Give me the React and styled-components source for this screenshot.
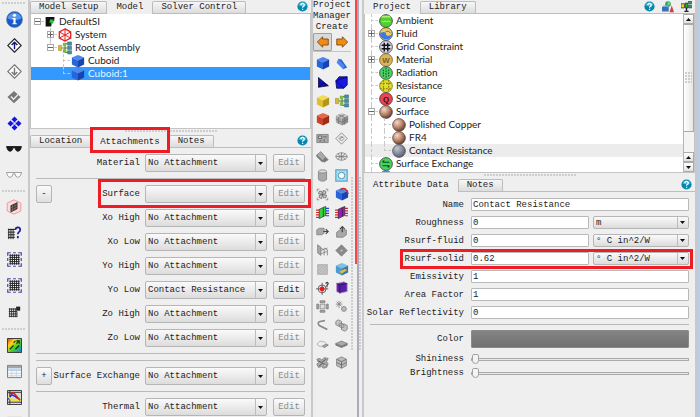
import React, { useId } from "react";
import styled, { createGlobalStyle, css } from "styled-components";

const Global = createGlobalStyle`
  * { box-sizing: border-box; }
  body { margin: 0; background: #efefef; }
  button, input, select { font: inherit; color: inherit; margin: 0; }
`;

const MONO = `"Liberation Mono", "DejaVu Sans Mono", monospace`;
const SANS = `Lato, "Noto Sans", sans-serif`;
const RED = "#ee1c25";

/* ---------- page frame ---------- */

const Page = styled.div`
  display: grid;
  grid-template-columns: 28px minmax(0, 285fr) 38px 11px minmax(0, 335fr) 3px;
  height: 100vh;
  overflow: hidden;
  background: #efefef;
  color: #1c1c1c;
  font: 9px/12px ${MONO};
`;

const SideBar = styled.nav`
  display: flex;
  flex-direction: column;
  align-items: stretch;
`;

const SideButton = styled.button`
  flex: none;
  display: grid;
  place-items: center;
  height: 26px;
  padding: 0;
  border: 0;
  background: none;
`;

const dots = css`
  background-image: radial-gradient(circle at 1px 1px, #cecece 1px, transparent 1px);
  background-size: 3px 3px;
`;

const SideGrip = styled.div`
  flex: none;
  height: ${(p) => p.$height}px;
  padding: ${(p) => p.$height - 4}px 2px 0;
  &::after {
    content: "";
    display: block;
    height: 3px;
    ${dots}
  }
`;

const Panel = styled.section`
  display: flex;
  flex-direction: column;
  min-width: 0;
  border-left: 2px solid #c9c9c9;
  border-right: 2px solid #c9c9c9;
`;

const BlueEdge = styled.div`
  background: #b5cfed;
`;

const Divider = styled.div`
  display: grid;
  grid-template-columns: 4px 2px 2px 3px;
  height: 100%;
`;

const DividerMark = styled.div`
  height: 264px;
  background: #f9454a;
`;

const DividerBar = styled.div`
  background: #a9acba;
`;

const VerticalDots = styled.div`
  align-self: start;
  justify-self: start;
  width: 3px;
  height: 174px;
  margin-top: 177px;
  ${dots}
`;

const PanelGrip = styled.div`
  flex: none;
  height: 5px;
  display: grid;
  place-items: center;
  &::after {
    content: "";
    width: 92px;
    height: 3px;
    ${dots}
  }
`;

/* ---------- tabs ---------- */

const TabBar = styled.div`
  flex: none;
  display: flex;
  align-items: flex-end;
  height: 14px;
  border-bottom: 1px solid #bdbdbd;
`;

const Tab = styled.button`
  height: ${(p) => (p.$active ? 14 : 12)}px;
  margin-bottom: ${(p) => (p.$active ? -1 : 0)}px;
  padding: 0 8px;
  border: 1px solid ${(p) => (p.$active ? "#efefef" : "#bcbcbc")};
  border-bottom: 0;
  border-radius: 2px 2px 0 0;
  background: ${(p) => (p.$active ? "#efefef" : "linear-gradient(#f7f7f7, #dcdcdc)")};
  line-height: 11px;
  white-space: nowrap;
`;

const TabTools = styled.div`
  display: flex;
  gap: 7px;
  margin-left: auto;
  padding-right: 3px;
  align-self: center;
`;

const PlainButton = styled.button`
  display: grid;
  place-items: center;
  padding: 0;
  border: 0;
  background: none;
`;

const Marked = styled.span`
  position: relative;
  display: flex;
  height: 14px;
  align-items: flex-end;
  margin-bottom: -1px;
  &::after {
    content: "";
    position: absolute;
    inset: -7px -1px -5px -1px;
    border: 3px solid ${RED};
    pointer-events: none;
    z-index: 2;
  }
`;

/* ---------- trees ---------- */

const TreeBox = styled.div`
  flex: none;
  display: flex;
  height: ${(p) => p.$height}px;
  padding-top: ${(p) => p.$top}px;
  overflow: hidden;
  background: #fff;
  border: solid #c4c4c4;
  border-width: 0 1px 1px 1px;
`;

const TreeList = styled.ul`
  flex: 1;
  margin: 0;
  padding: 0;
  list-style: none;
  font: 10px/13px ${SANS};
`;

const TreeRow = styled.li`
  display: flex;
  align-items: center;
  height: 13px;
  white-space: nowrap;
  background: ${(p) => p.$bg || "none"};
  color: ${(p) => p.$color || "#222"};
`;

const Guide = styled.span`
  flex: none;
  align-self: stretch;
  width: 13px;
  display: grid;
  grid-template-columns: 6px 7px;
  place-items: center start;
  &::before {
    content: "";
    grid-column: 2;
    grid-row: 1;
    align-self: start;
    width: 0;
    height: ${(p) => (p.$line === "end" ? "50%" : "100%")};
    border-left: ${(p) => (p.$line ? "1px dashed #c8c8c8" : "0")};
  }
  &::after {
    content: "";
    grid-column: 2;
    grid-row: 1;
    width: ${(p) => (p.$branch ? 7 : 0)}px;
    border-top: 1px dashed #c8c8c8;
  }
`;

const Expander = styled.button`
  grid-column: 1 / 3;
  grid-row: 1;
  justify-self: start;
  z-index: 1;
  width: 7px;
  height: 7px;
  margin-left: 3px;
  padding: 0;
  display: grid;
  place-items: center;
  border: 1px solid #aaa;
  background: #fff;
`;

const IconSlot = styled.span`
  flex: none;
  display: grid;
  place-items: center;
  width: ${(p) => p.$width || 15}px;
  margin-right: 3px;
`;

const ScrollBar = styled.div`
  flex: none;
  display: flex;
  flex-direction: column;
  width: 11px;
  border-left: 1px solid #b5b5b5;
  background: #f4f4f4;
`;

const ScrollButton = styled.button`
  flex: none;
  display: grid;
  place-items: center;
  height: 10px;
  padding: 0;
  border: 1px solid #aaa;
  border-left: 0;
  background: linear-gradient(#fff, #e2e2e2);
`;

const ScrollThumb = styled.div`
  height: 108px;
  margin-bottom: auto;
  display: grid;
  place-items: center;
  border: 1px solid #aaa;
  border-left: 0;
  background: linear-gradient(90deg, #fff, #e6e6e6);
  &::after {
    content: "";
    width: 7px;
    height: 12px;
    ${dots}
  }
`;

/* ---------- forms ---------- */

const AttachForm = styled.form`
  padding: 6px 6px 0 6px;
  display: flex;
  flex-direction: column;
  gap: 6px;
`;

const AttachRow = styled.div`
  position: relative;
  flex: none;
  display: grid;
  grid-template-columns: 16px 88px minmax(0, 1fr) 32px;
  align-items: center;
  height: 18px;
  label { grid-area: 1 / 2; justify-self: end; white-space: nowrap; }
  ${(p) => p.$marked && css`
    &::after {
      content: "";
      position: absolute;
      inset: -6px -6px -5px 62px;
      border: 3px solid ${RED};
      pointer-events: none;
    }
  `}
`;

const Rule = styled.hr`
  flex: none;
  width: 100%;
  margin: 0;
  border: 0;
  border-top: 1px solid #b9b9b9;
`;

const SmallButton = styled.button`
  grid-area: 1 / ${(p) => p.$col};
  height: 18px;
  padding: 0;
  border: 1px solid #b4b4b4;
  border-radius: 2px;
  background: linear-gradient(#fbfbfb, #dedede);
  &:disabled { color: #8e8e8e; }
`;

const SelectBox = styled.span`
  display: grid;
  grid-template-columns: minmax(0, 1fr) 11px;
  grid-template-rows: minmax(0, 1fr);
  height: ${(p) => p.$height}px;
  margin: ${(p) => (p.$spaced ? "0 6px 0 5px" : "0")};
  border: 1px solid #b6b6b6;
  border-radius: 2px;
  background: linear-gradient(#fafafa, #dcdcdc);
  ${(p) => p.$spaced && "grid-column: 3; grid-row: 1;"}
  select {
    grid-area: 1 / 1 / 2 / 3;
    align-self: center;
    appearance: none;
    width: 100%;
    padding: 0 12px 0 2px;
    border: 0;
    background: transparent;
    line-height: 12px;
    color: #1c1c1c;
  }
  svg { grid-area: 1 / 2; place-self: center; pointer-events: none; }
  &::after {
    content: "";
    grid-area: 1 / 2;
    justify-self: start;
    border-left: 1px solid #bdbdbd;
    pointer-events: none;
  }
`;

const AttrForm = styled.form`
  padding: 6px 6px 0 6px;
  display: flex;
  flex-direction: column;
  gap: 5px;
`;

const AttrRow = styled.div`
  position: relative;
  display: grid;
  grid-template-columns: 94px minmax(0, 1fr) ${(p) => (p.$unit ? "minmax(0, 96px)" : "")};
  column-gap: 4px;
  align-items: center;
  height: ${(p) => p.$height || 13}px;
  label { justify-self: end; white-space: nowrap; }
  > :nth-child(2) { margin-left: 3px; }
  ${(p) => p.$marked && css`
    &::after {
      content: "";
      position: absolute;
      inset: -3px -4px -4px 30px;
      border: 3px solid ${RED};
      pointer-events: none;
    }
  `}
`;

const TextField = styled.input`
  min-width: 0;
  height: 13px;
  padding: 0 1px;
  border: 1px solid #b9b9b9;
  border-radius: 1px;
  background: #fff;
`;

const ColorButton = styled.button`
  height: 18px;
  border: 1px solid #8a8a8a;
  border-radius: 1px;
  background: linear-gradient(#848484, #717171);
`;

const Slider = styled.input`
  appearance: none;
  min-width: 0;
  height: 10px;
  background: none;
  &::-webkit-slider-runnable-track {
    height: 3px;
    border: 1px solid #ababab;
    background: #e8e8e8;
  }
  &::-webkit-slider-thumb {
    appearance: none;
    width: 7px;
    height: 10px;
    margin-top: -5px;
    border: 1px solid #a0a0a0;
    border-radius: 2px 2px 4px 4px;
    background: #f3f3f3;
  }
`;

const Sliders = styled.div`
  display: grid;
  gap: 4px;
`;

/* ---------- palette ---------- */

const Palette = styled.aside`
  display: flex;
  flex-direction: column;
`;

const PaletteTitle = styled.div`
  line-height: 11px;
  text-align: center;
`;

const ArrowRow = styled.div`
  display: grid;
  grid-template-columns: 1fr 1fr;
  height: 19px;
  border-bottom: 1px solid #c4c4c4;
`;

const ArrowButton = styled(PlainButton)`
  border: ${(p) => (p.$pressed ? "1px solid #9f9f9f" : "0")};
  border-radius: 1px;
  background: ${(p) => (p.$pressed ? "#dadada" : "none")};
`;

const PaletteGrid = styled.div`
  display: grid;
  grid-template-columns: 1fr 1fr;
  grid-template-rows: repeat(17, 1fr);
  height: 318px;
  margin-top: 2px;
`;

/* ---------- drawings ---------- */

const Svg = ({ s = 14, children, v = 16 }) => (
  <svg width={s} height={s} viewBox={`0 0 ${v} ${v}`} aria-hidden="true">{children}</svg>
);

const Help = () => (
  <Svg s={11}>
    <circle cx="8" cy="8" r="7.4" fill="#0786ad" />
    <path d="M2 6a6.5 6.5 0 0 1 12 0q-6 3-12 0" fill="#4fbbd8" />
    <path d="M5.6 6Q5.8 3.6 8.1 3.6T10.5 6Q10.5 7.3 9 8.1 8.1 8.6 8.1 9.8M8.1 11.2v1.9" fill="none" stroke="#fff" strokeWidth="1.8" />
  </Svg>
);

const Triangle = ({ up }) => (
  <svg width="5" height="3" viewBox="0 0 5 3" aria-hidden="true">
    <path d={up ? "M0 3L2.5 0 5 3z" : "M0 0H5L2.5 3z"} fill="#111" />
  </svg>
);

const Cube = ({ a, b, c, s = 14, children }) => (
  <Svg s={s}>
    <path d="M8 1L15 4 8 7.500 1 4z" fill={a} />
    <path d="M1 4L8 7.500V15.500L1 12z" fill={b} />
    <path d="M15 4L8 7.500V15.500L15 12z" fill={c} />
    {children}
  </Svg>
);

const BlueCube = (p) => <Cube a="#4f86ee" b="#2765dc" c="#1745ad" {...p} />;

const Info = () => (
  <Svg s={17}>
    <circle cx="8" cy="8" r="7.500" fill="#1659c8" stroke="#5e7fae" strokeWidth=".6" />
    <path d="M1.500 7a6.600 6.600 0 0 1 13 0Q8 10 1.500 7" fill="#5796ea" />
    <circle cx="8" cy="4" r="1.500" fill="#fff" />
    <path d="M6 6.500h3v5h1.200v1H6v-1h1v-4H6z" fill="#fff" />
  </Svg>
);

const Diamond = ({ stroke, down }) => (
  <Svg s={15}>
    <path d="M8 .8L15.200 8 8 15.200.8 8z" fill="#fff" stroke={down ? "#777" : "#222"} strokeWidth="1.200" />
    <path d={down ? "M8 4v7M5 8.500l3 3 3-3" : "M8 12V5M5 7.500l3-3 3 3"} fill="none" stroke={stroke} strokeWidth="1.500" />
  </Svg>
);

const CheckDiamond = () => (
  <Svg s={14}>
    <path d="M8 1L15.500 8 8 15 .5 8z" fill="#777" />
    <path d="M4.500 7.500l3 3L12.500 5.500" fill="none" stroke="#eee" strokeWidth="1.600" />
  </Svg>
);

const BlueDiamond = () => (
  <Svg s={15}>
    <path d="M8 .5L15.500 8 8 15.500.5 8z" fill="#1414e0" />
    <path d="M4 4l3 3M12 4L9 7M4 12l3-3M12 12L9 9" stroke="#efefef" strokeWidth="1.600" />
    <path d="M8 6.500L9.500 8 8 9.500 6.500 8z" fill="#efefef" />
  </Svg>
);

const Glasses = ({ dark }) => (
  <Svg s={16}>
    <path d="M.5 5.500H15.500L14.500 8.500Q13.500 10.500 11.500 10.300 9.500 10 9 6.800H7Q6.500 10 4.500 10.300 2.500 10.500 1.500 8.500z"
      fill={dark ? "#1a1a1a" : "#fafafa"} stroke={dark ? "#111" : "#8c8c8c"} strokeWidth=".8" />
  </Svg>
);

const HexGrid = () => (
  <Svg s={16}>
    <path d="M8 .8L14.800 4v8L8 15.200 1.200 12V4z" fill="#fbdcdc" stroke="#f19a9a" />
    <path d="M4.500 6.500l7-3.500v7l-7 3.500z" fill="#3b3433" />
    <path d="M6.500 5v8M9 4v8M4.500 9l7-3.500M4.500 11.500l7-3.500" stroke="#8b7977" strokeWidth=".6" />
  </Svg>
);

const GridHelp = () => (
  <Svg s={14}>
    <path d="M1 4h8M1 7h8M1 10h8M1 13h8M2 3v12M4.500 3v12M7 3v12" stroke="#222" strokeWidth="1.100" />
    <path d="M9.500 4.500Q9.800 1.500 12.500 1.500T15 4.500Q15 6 13.500 7 12.400 7.800 12.400 9.500M12.400 11.500v2.500" fill="none" stroke="#1d1d96" strokeWidth="2" />
  </Svg>
);

const GridBlue = () => (
  <Svg s={15}>
    <path d="M3.500 2.500v11M5.800 2.500v11M8 2.500v11M10.200 2.500v11M12.500 2.500v11M2.500 3.500h11M2.500 5.800h11M2.500 8h11M2.500 10.200h11M2.500 12.500h11" stroke="#222" />
    <path d="M.8 4V.8H4M12 .8h3.200V4M15.200 12v3.200H12M4 15.200H.8V12M6.500.8h3M6.500 15.200h3M.8 6.500v3M15.200 6.500v3" fill="none" stroke="#4646b0" strokeWidth="1.300" />
  </Svg>
);

const GridFlag = () => (
  <Svg s={13}>
    <path d="M2 4v11M4.500 4v11M7 4v11M9.500 4v11M1 5h9M1 8h10M1 11h10M1 14h10M11 8v7" stroke="#333" strokeWidth="1.200" />
    <path d="M10 2h5v5h-5z" fill="#222" />
  </Svg>
);

const Rainbow = () => (
  <Svg s={15}>
    <defs>
      <linearGradient id="rain" x1="0" y1="0" x2="1" y2="1">
        <stop offset="0" stopColor="#f02a12" /><stop offset=".3" stopColor="#f8d910" />
        <stop offset=".6" stopColor="#39d12c" /><stop offset="1" stopColor="#1279e8" />
      </linearGradient>
    </defs>
    <path d="M.5.5h15v15H.5z" fill="url(#rain)" stroke="#333" />
    <path d="M3 12l4-4M9 12l4-4M7 5l2-2M10 6l3-3M10 3h3v3" fill="none" stroke="#222" strokeWidth="1.200" />
  </Svg>
);

const TableIcon = () => (
  <Svg s={15}>
    <path d="M.5 1.500h15v13H.5z" fill="#f7f7f7" stroke="#777" />
    <path d="M1 2h14v2.500H1z" fill="#a6a6a6" /><path d="M1 5h14v2.500H1z" fill="#b6d6f3" />
    <path d="M5 5v9M10 5v9M1 10h14M1 12.500h14" stroke="#c9d5df" />
  </Svg>
);

const ChartIcon = () => (
  <Svg s={15}>
    <path d="M.5.5h15v15H.5z" fill="#d9d9d9" stroke="#333" />
    <path d="M1 2.500h14M1 13h14M3 1v14" stroke="#333" />
    <path d="M1 10L5 5l4 2 6 6" fill="none" stroke="#1a28d4" strokeWidth="1.500" />
    <path d="M1 7l5 4 4-1 5 2" fill="none" stroke="#f3e51c" strokeWidth="1.800" />
    <path d="M2 4l5-1 7 8" fill="none" stroke="#e31a1a" strokeWidth="1.800" />
  </Svg>
);

const FileF = () => (
  <Svg s={10}>
    <path d="M1 0h14v5l-4 3-1 7H1z" fill="#111" />
    <path d="M8 4h6l-2 3h3l-6 7 1-5H7z" fill="#2fbf3c" />
  </Svg>
);

const SystemIcon = () => (
  <Svg s={14}>
    <path d="M8 1L14.500 4.500v7L8 15 1.500 11.500v-7z" fill="#fff2f2" stroke="#e02020" strokeWidth="1.500" />
    <path d="M1.500 4.500L8 8l6.500-3.500M8 8v7M8 1v7M1.500 11.500L8 8l6.500 3.500" fill="none" stroke="#e02020" strokeWidth="1.100" />
  </Svg>
);

const AssemblyIcon = () => (
  <Svg s={14}>
    <path d="M4 8h4M8 3h3M8 13h3M8 3v10M8 8h3" stroke="#527a3c" strokeWidth="1.200" fill="none" />
    <path d="M.5 5h3.500v6H.5z" fill="#e0b62e" stroke="#9b8230" strokeWidth=".6" />
    <path d="M5.500 2h4v4h-4zM5.500 9.500h4v4h-4z" fill="#7cba4d" />
    <path d="M11 1h4.500v3.800H11zM11 6h4.500v3.800H11zM11 11h4.500v3.800H11z" fill="#4791a2" stroke="#2f6573" strokeWidth=".6" />
  </Svg>
);

const ShapesIcon = () => (
  <Svg s={12}>
    <circle cx="8" cy="4" r="3.800" fill="#28a65c" />
    <path d="M8 .5a3.500 3.500 0 0 1 3 4l-4 1z" fill="#72cb8e" />
    <path d="M0 8h9v6H0z" fill="#3772b5" /><path d="M0 8l2-2h8L9 8z" fill="#79a8d6" />
    <path d="M13 6l3 9h-6z" fill="#d43a47" />
  </Svg>
);

const ProjectIcon = () => (
  <Svg s={11}>
    <path d="M0 4h5v6H0z" fill="#e9df20" stroke="#222" /><path d="M6 3h4v7H6z" fill="#25ae32" stroke="#222" />
    <path d="M11 0h4.500v4H11zM11 6h4.500v4H11z" fill="#34987c" stroke="#1d5040" />
    <path d="M8 10v5M5 15h6" stroke="#222" strokeWidth="2" />
  </Svg>
);

const Ball = ({ fill, ring = "#444", children }) => (
  <Svg s={14}>
    <circle cx="8" cy="8" r="7.300" fill={fill} stroke={ring} strokeWidth="1" />
    {children}
  </Svg>
);

const Sphere = ({ id, light, mid, dark }) => (
  <Svg s={14}>
    <defs>
      <radialGradient id={id} cx=".35" cy=".3" r=".75">
        <stop offset="0" stopColor={light} /><stop offset=".5" stopColor={mid} /><stop offset="1" stopColor={dark} />
      </radialGradient>
    </defs>
    <circle cx="8" cy="8" r="7.300" fill={`url(#${id})`} stroke="#4a4442" strokeWidth=".8" />
  </Svg>
);

const Letter = ({ fill, children }) => (
  <text x="8" y="11.200" textAnchor="middle" fontFamily="Liberation Sans" fontWeight="700" fontSize="9" fill={fill}>{children}</text>
);

const Arrow = ({ right }) => (
  <Svg s={12}>
    <path d={right ? "M15.500 8L8.500 15v-3H1V4h7.500V1z" : "M.5 8l7-7v3H15v8H7.500v3z"} fill="#f28c10" stroke="#7d4b10" strokeWidth="1.200" />
  </Svg>
);

const Gray = ({ children, s = 13 }) => (
  <Svg s={s}><g fill="#a9a9a9" stroke="#7f7f7f" strokeWidth="1">{children}</g></Svg>
);

const Chip = ({ fill, dark }) => (
  <Svg s={13}>
    <path d="M0 5h4M0 8h4M0 11h4M0 14h4" stroke="#e02828" strokeWidth="1.400" />
    <path d="M12 3h4M12 6h4M12 9h4M12 12h4" stroke={dark ? "#d02a38" : "#2a42dd"} strokeWidth="1.400" />
    <path d="M4 4l8-3.500v11L4 15.500z" fill={fill} stroke="#222" strokeWidth=".8" />
    <path d="M9 2v11" stroke="#222" strokeWidth=".8" />
  </Svg>
);

const paletteItems = [
  ["Cuboid", <BlueCube />],
  ["Prism", <Svg s={13}><path d="M4 2l4 1 7 10-5 2z" fill="#2864ce" /><path d="M4 2L2 7l8 8 2-4z" fill="#4f86ee" /></Svg>],
  ["Tet", <Svg s={12}><path d="M2 2v13l13-2z" fill="#1111a8" stroke="#050545" /><path d="M2 15l6-6 7 4" fill="none" stroke="#050545" /></Svg>],
  ["Inverted Tet", <Svg s={13}><path d="M5 1h10v10l-4 4H2L1 6z" fill="#1818e2" stroke="#080850" /><path d="M1 6l14-5M1 6l10 9" stroke="#080870" fill="none" /></Svg>],
  ["Enclosure", <Cube a="#f1dc55" b="#dfc02a" c="#b6941a" />],
  ["Assembly", <AssemblyIcon />],
  ["Heat Source", <Cube a="#e4694b" b="#cc4126" c="#9d2d17" />],
  ["Array", <Cube a="#cacaca" b="#a6a6a6" c="#8b8b8b"><path d="M4 3l7 3.500v8M11 3L4 6.500v7M1 8l7 4 7-4" fill="none" stroke="#777" /></Cube>],
  ["Board", <Gray><path d="M1 3h14v10H1z" /><path d="M3 5h4v3H3zM9 6h4M4 11h3M10 9v3" fill="#ddd" stroke="#555" /></Gray>],
  ["Diamond", <Gray><path d="M8 1l7 7-7 7-7-7z" fill="#ececec" /><path d="M8 5L5 8l3 3 3-3zM6 8l4-2" fill="none" /></Gray>],
  ["Plate", <Gray><path d="M1 6l5-4 6 7-4 4z" /><path d="M8 13l4-4 3 3-5 3zM1 6v2l7 7v-2z" fill="#777" /></Gray>],
  ["Ring", <Gray><ellipse cx="8" cy="8" rx="7" ry="4.500" fill="#e9e9e9" /><path d="M1 8h14M8 3v10M3 5l10 6M13 5L3 11" /></Gray>],
  ["Cylinder", <Gray><path d="M3 3v10q5 4 10 0V3" /><ellipse cx="8" cy="3" rx="5" ry="2" fill="#ddd" /></Gray>],
  ["Hole", <Svg s={13}><path d="M1 1h14v14H1z" fill="#a6dff3" stroke="#5aa8c6" strokeWidth="1.500" /><circle cx="8" cy="8" r="4" fill="#eefaff" stroke="#437f9a" /></Svg>],
  ["Fan", <Gray><path d="M1.500 4V1.500H4M12 1.500h2.500V4M14.500 12v2.500H12M4 14.500H1.500V12" fill="none" /><path d="M8 8L3 7l1-3 3 0zM8 8l1-5 3 1v3zM8 8l5 1-1 3H9zM8 8l-1 5-3-1V9z" fill="#ccc" stroke="#666" /></Gray>],
  ["Rotate", <BlueCube><path d="M6 3q7-4 9 5" fill="none" stroke="#d82727" strokeWidth="1.600" /></BlueCube>],
  ["Component", <Chip fill="#34d23c" />],
  ["Die", <Chip fill="#9a1db4" dark />],
  ["Flow", <Gray><path d="M1 6l3-2h6v6l-3 2H1z" /><path d="M9 8h6M12 5l3 3-3 3" stroke="#444" fill="none" strokeWidth="1.500" /></Gray>],
  ["Blower", <Gray><path d="M2 9l4-3h8v6l-4 3H2z" /><path d="M9 9V2M6 5l3-3 3 3" stroke="#444" fill="none" strokeWidth="1.500" /></Gray>],
  ["Fins", <Gray><path d="M2 1l4 3v10l-4-3z" fill="#a9a9a9" /><path d="M6 5l4 2v7M10 5l4 2v7M6 8l8-3M6 12l8-3" fill="none" /></Gray>],
  ["Cooler", <Gray><path d="M8 1l7 7-7 7-7-7z" fill="#8a8a8a" /><path d="M8 6l2 2-2 2-2-2z" fill="#ccc" /></Gray>],
  ["Perforated Plate", <Gray><path d="M2 2h12v12H2z" fill="#c2c2c2" stroke="#aaa" /><path d="M2 6l4-4M2 10l8-8M2 14L14 2M6 14l8-8M10 14l4-4" stroke="#b0b0b0" /></Gray>],
  ["Region", <Cube a="#7cc0e6" b="#4b9ccc" c="#377aa6"><path d="M5 11l6-3 3 1-6 4z" fill="#ecba35" /></Cube>],
  ["Monitor Point", <Svg s={14}><circle cx="7" cy="9" r="4.500" fill="none" stroke="#555" /><path d="M7 2v14M0 9h14" stroke="#555" /><circle cx="7" cy="9" r="2.800" fill="#f01616" /><path d="M11 3q2-3 3 0l-1.500 2v2" fill="none" stroke="#333" strokeWidth="1.300" /></Svg>],
  ["Volume", <Svg s={13}><path d="M2 3l9-2 4 2v10l-9 2-4-2z" fill="#5520a4" stroke="#bb94c6" /><path d="M2 3l4 2v10M6 5l9-2" fill="none" stroke="#35106c" /></Svg>],
  ["Network", <Gray><path d="M5 5h6v6H5z" fill="#ddd" /><path d="M5 1h6v2H5zM5 13h6v2H5zM1 5h2v6H1zM13 5h2v6h-2z" /></Gray>],
  ["Source", <Gray><path d="M5 1v9M1 5h8M2 2l6 6M8 2L2 8" /><circle cx="11" cy="11" r="3" fill="#bbb" /></Gray>],
  ["Heat Pipe", <Gray><path d="M14 13L4 8Q1 4 5 3l6-1" fill="none" strokeWidth="2" stroke="#888" /></Gray>],
  ["Racks", <Gray><path d="M1 3l3-2 4 2v4L5 9 1 7zM8 8l3-2 4 2v5l-3 2-4-2zM5 6l3-1 3 2v3l-3 1-3-2z" fill="#c4c4c4" /></Gray>],
  ["Cloud", <Gray><path d="M1 9l4-4 5 1 5 4-5 3-3-2-2 1z" fill="#ededed" stroke="#aaa" /><path d="M8 11l4-2 3 1-5 3z" /></Gray>],
  ["Slab", <Gray><path d="M1 8v2l7 3 7-3V8l-7 3z" fill="#777" /><path d="M1 8l7-3 7 3-7 3z" /></Gray>],
  ["Controller", <Gray><path d="M1 4l4-1 2 2 3-3 5 1-2 4 2 3-2 4-4 1-2-2-4 1-2-4 2-2z" /><path d="M3 6l4 2 5-4M4 12l4-3 5 2" fill="none" stroke="#444" /><circle cx="11" cy="12" r="1.500" fill="#eee" /></Gray>],
  ["Cabinet", <Gray><path d="M8 1l6 3v8l-6 3-6-3V4z" fill="#bcbcbc" /><path d="M2 4l6 3 6-3M8 7v8M2 8l6 3 6-3" fill="none" stroke="#666" /></Gray>],
];

/* ---------- composed parts ---------- */

const HelpButton = () => <PlainButton type="button" aria-label="Help"><Help /></PlainButton>;

function TreeItem({ level = 0, lines = [], expand, icon, iconWidth, label, bg, color }) {
  return (
    <TreeRow role="treeitem" aria-level={level + 1} $bg={bg} $color={color}>
      {Array.from({ length: level + 1 }, (_, i) => (
        <Guide key={i} $line={lines[i]} $branch={i === level}>
          {i === level && expand && (
            <Expander type="button" aria-label={expand === "+" ? "Expand" : "Collapse"}>
              <svg width="5" height="5" viewBox="0 0 5 5" aria-hidden="true">
                <path d={expand === "+" ? "M0 2.500h5M2.500 0v5" : "M0 2.500h5"} stroke="#666" />
              </svg>
            </Expander>
          )}
        </Guide>
      ))}
      <IconSlot $width={iconWidth}>{icon}</IconSlot>
      {label}
    </TreeRow>
  );
}

function Select({ id, value, height = 18, spaced, label }) {
  return (
    <SelectBox $height={height} $spaced={spaced}>
      <select id={id} aria-label={label} defaultValue={value}>
        <option value={value}>{value}</option>
      </select>
      <Triangle />
    </SelectBox>
  );
}

function Attachment({ label, value = "No Attachment", toggle, enabled, marked }) {
  const id = useId();
  return (
    <AttachRow $marked={marked}>
      {toggle && <SmallButton type="button" $col={1}>{toggle}</SmallButton>}
      <label htmlFor={id}>{label}</label>
      <Select id={id} value={value} spaced />
      <SmallButton type="button" $col={4} disabled={!enabled}>Edit</SmallButton>
    </AttachRow>
  );
}

function Attribute({ label, value, unit, marked }) {
  const id = useId();
  return (
    <AttrRow $unit={unit} $marked={marked}>
      <label htmlFor={id}>{label}</label>
      <TextField id={id} defaultValue={value} />
      {unit && <Select value={unit} height={13} label={`${label} unit`} />}
    </AttrRow>
  );
}

function SliderRow({ label }) {
  const id = useId();
  return (
    <AttrRow $height={10}>
      <label htmlFor={id}>{label}</label>
      <Slider id={id} type="range" min="0" max="100" defaultValue="0" />
    </AttrRow>
  );
}

const sideGroups = [
  [6, [["Information", <Info />], ["Move up", <Diamond stroke="#16167a" />], ["Move down", <Diamond down stroke="#777" />],
    ["Check", <CheckDiamond />], ["Select", <BlueDiamond />], ["Hide", <Glasses dark />], ["Show", <Glasses />]]],
  [6, [["Grid view", <HexGrid />], ["Grid help", <GridHelp />], ["System grid", <GridBlue />], ["Local grid", <GridBlue />], ["Grid summary", <GridFlag />]]],
  [8, [["Visualize", <Rainbow />], ["Tables", <TableIcon />], ["Profiles", <ChartIcon />], ["Windows", <TableIcon />]]],
];

const copper = { light: "#f7d9c8", mid: "#bf8a70", dark: "#5d3727" };

export default function App() {
  const colorId = useId();
  return (
    <>
      <Global />
      <Page>
        <SideBar aria-label="Tools">
          {sideGroups.map(([h, items], i) => (
            <React.Fragment key={i}>
              <SideGrip $height={h} />
              {items.map(([name, icon]) => (
                <SideButton key={name} type="button" aria-label={name}>{icon}</SideButton>
              ))}
            </React.Fragment>
          ))}
        </SideBar>

        <Panel>
          <TabBar role="tablist">
            <Tab role="tab">Model Setup</Tab>
            <Tab role="tab" $active>Model</Tab>
            <Tab role="tab">Solver Control</Tab>
            <TabTools><HelpButton /></TabTools>
          </TabBar>
          <TreeBox $height={115} $top={1}>
            <TreeList role="tree">
              <TreeItem expand="-" icon={<FileF />} iconWidth={12} label="DefaultSI" />
              <TreeItem level={1} lines={[null, "full"]} expand="+" icon={<SystemIcon />} label="System" />
              <TreeItem level={1} lines={[null, "end"]} expand="-" icon={<AssemblyIcon />} label="Root Assembly" />
              <TreeItem level={2} lines={[null, null, "full"]} icon={<BlueCube />} label="Cuboid" />
              <TreeItem level={2} lines={[null, null, "end"]} icon={<BlueCube />} label="Cuboid:1" bg="#3399ff" color="#e8f3ff" />
            </TreeList>
          </TreeBox>
          <PanelGrip />
          <TabBar role="tablist">
            <Tab role="tab">Location</Tab>
            <Marked><Tab role="tab" $active>Attachments</Tab></Marked>
            <Tab role="tab">Notes</Tab>
            <TabTools><HelpButton /></TabTools>
          </TabBar>
          <AttachForm>
            <Attachment label="Material" />
            <Rule />
            <Attachment label="Surface" value="" toggle="-" marked />
            <Attachment label="Xo High" />
            <Attachment label="Xo Low" />
            <Attachment label="Yo High" />
            <Attachment label="Yo Low" value="Contact Resistance" enabled />
            <Attachment label="Zo High" />
            <Attachment label="Zo Low" />
            <Rule />
            <Rule />
            <Attachment label="Surface Exchange" toggle="+" />
            <Rule />
            <Attachment label="Thermal" />
          </AttachForm>
        </Panel>

        <Palette>
          <PaletteTitle>Project Manager Create</PaletteTitle>
          <ArrowRow>
            <ArrowButton type="button" $pressed aria-label="Back"><Arrow /></ArrowButton>
            <ArrowButton type="button" aria-label="Forward"><Arrow right /></ArrowButton>
          </ArrowRow>
          <PaletteGrid>
            {paletteItems.map(([name, icon]) => (
              <PlainButton key={name} type="button" aria-label={name}>{icon}</PlainButton>
            ))}
          </PaletteGrid>
        </Palette>

        <Divider>
          <VerticalDots />
          <DividerMark />
          <DividerBar />
          <VerticalDots />
        </Divider>

        <Panel>
          <TabBar role="tablist">
            <Tab role="tab" $active>Project</Tab>
            <Tab role="tab">Library</Tab>
            <TabTools>
              <HelpButton />
              <PlainButton type="button" aria-label="Shapes"><ShapesIcon /></PlainButton>
              <PlainButton type="button" aria-label="Project"><ProjectIcon /></PlainButton>
            </TabTools>
          </TabBar>
          <TreeBox $height={159} $top={0}>
            <TreeList role="tree">
              <TreeItem lines={["full"]} label="Ambient" icon={<Ball fill="#4fd02f"><path d="M2 4h12L12 2H4z" fill="#b3ef78" /><path d="M3 8l2 1 2-1 2 1 2-1 2 1" stroke="#b8f59b" fill="none" /></Ball>} />
              <TreeItem lines={["full"]} expand="+" label="Fluid" icon={<Ball fill="#f0cc62"><path d="M.8 8q4-4 7-1 0 3 3 3 3 0 4.500-3a7.300 7.300 0 0 1-14.500 1" fill="#3d78e8" /><path d="M7 6q4-3 6 1" stroke="#3466cc" fill="none" /></Ball>} />
              <TreeItem lines={["full"]} label="Grid Constraint" icon={<Ball fill="#d6d6e8"><path d="M6 3v10M10 3v10M3 6h10M3 10h10" stroke="#111" strokeWidth="1.600" /></Ball>} />
              <TreeItem lines={["full"]} expand="+" label="Material" icon={<Ball fill="#d9b65c" ring="#75643a"><Letter fill="#7c5f20">W</Letter></Ball>} />
              <TreeItem lines={["full"]} label="Radiation" icon={<Ball fill="#4ed464"><path d="M8 2v12M5 4v8M11 4v8" stroke="#146a2a" strokeDasharray="2 1" strokeWidth="1.400" /></Ball>} />
              <TreeItem lines={["full"]} label="Resistance" icon={<Ball fill="#e0dc2a" ring="#8c8720"><path d="M5 1v14M11 1v14M1 5h14M1 11h14" stroke="#8c861a" strokeDasharray="2 1.500" strokeWidth="1.400" /></Ball>} />
              <TreeItem lines={["full"]} label="Source" icon={<Ball fill="#ea4550"><Letter fill="#4a0710">Q</Letter></Ball>} />
              <TreeItem lines={["full"]} expand="-" label="Surface" icon={<Sphere id="s1" {...copper} />} />
              <TreeItem level={1} lines={["full", "full"]} label="Polished Copper" icon={<Sphere id="s2" {...copper} />} />
              <TreeItem level={1} lines={["full", "full"]} label="FR4" icon={<Sphere id="s3" {...copper} />} />
              <TreeItem level={1} lines={["full", "end"]} label="Contact Resistance" bg="#ececec" icon={<Sphere id="s4" light="#c3c7d3" mid="#8a8fa2" dark="#565b70" />} />
              <TreeItem lines={["full"]} label="Surface Exchange" icon={<Ball fill="#48d45c"><path d="M4 6h8M4 10h8M6 4L4 6M10 12l2-2" stroke="#0c4a1a" strokeWidth="1.300" fill="none" /></Ball>} />
              <TreeItem lines={["full"]} icon={<Ball fill="#2f9be8" ring="#2f7fc0" />} />
            </TreeList>
            <ScrollBar>
              <ScrollButton type="button" aria-label="Scroll up"><Triangle up /></ScrollButton>
              <ScrollThumb />
              <ScrollButton type="button" aria-label="Page up"><Triangle up /></ScrollButton>
              <ScrollButton type="button" aria-label="Scroll down"><Triangle /></ScrollButton>
            </ScrollBar>
          </TreeBox>
          <PanelGrip />
          <TabBar role="tablist">
            <Tab role="tab" $active>Attribute Data</Tab>
            <Tab role="tab">Notes</Tab>
            <TabTools><HelpButton /></TabTools>
          </TabBar>
          <AttrForm>
            <Attribute label="Name" value="Contact Resistance" />
            <Attribute label="Roughness" value="0" unit="m" />
            <Attribute label="Rsurf-fluid" value="0" unit="° C in^2/W" />
            <Attribute label="Rsurf-solid" value="0.62" unit="° C in^2/W" marked />
            <Attribute label="Emissivity" value="1" />
            <Attribute label="Area Factor" value="1" />
            <Attribute label="Solar Reflectivity" value="0" />
            <Rule />
            <AttrRow $height={18}>
              <label htmlFor={colorId}>Color</label>
              <ColorButton id={colorId} type="button" />
            </AttrRow>
            <Sliders>
              <SliderRow label="Shininess" />
              <SliderRow label="Brightness" />
            </Sliders>
          </AttrForm>
        </Panel>
        <BlueEdge />
      </Page>
    </>
  );
}
